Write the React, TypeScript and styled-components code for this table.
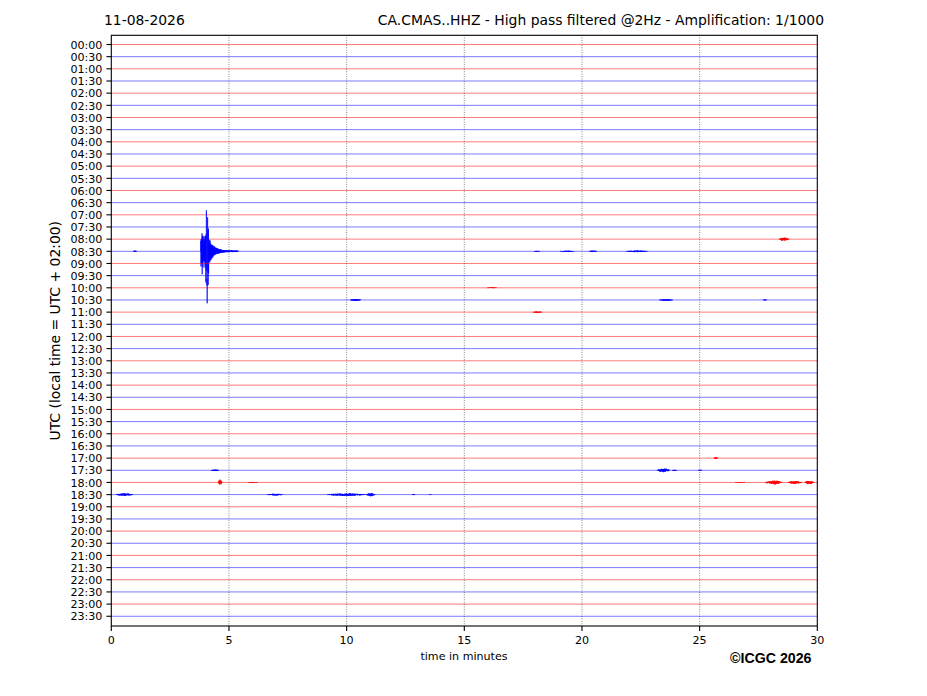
import React, { useMemo } from 'react';
import styled, { createGlobalStyle } from 'styled-components';

const GlobalStyle = createGlobalStyle`
  html, body { margin: 0; padding: 0; background: #ffffff; }
  body { font-family: "DejaVu Sans", "Noto Sans", sans-serif; color: #000; }
`;

const Figure = styled.div`
  width: 927px;
  height: 696px;
  display: flex;
  flex-direction: column;
  background: #ffffff;
  overflow: hidden;
`;

const Header = styled.header`
  height: 30px;
  box-sizing: border-box;
  padding: 12px 103px 0 104px;
  display: flex;
  justify-content: space-between;
  align-items: flex-start;
  font-family: "DejaVu Sans", sans-serif;
  font-size: 13.9px;
  line-height: normal;
  white-space: nowrap;
`;

const HeaderText = styled.span``;

const PlotRow = styled.div`
  display: flex;
  height: 620px;
  padding-left: 47px;
`;

const YLabelBox = styled.div`
  width: 16px;
  height: 591px;
  margin-top: 5.3px;
  display: flex;
  align-items: center;
  justify-content: center;
`;

const YLabel = styled.span`
  writing-mode: vertical-rl;
  transform: rotate(180deg);
  font-family: "DejaVu Sans", sans-serif;
  font-size: 13.9px;
  line-height: 16px;
  white-space: nowrap;
`;

const Chart = styled.svg`
  display: block;
  flex: none;
`;

const TickLabel = styled.text`
  font-family: "DejaVu Sans", sans-serif;
  font-size: 11.1px;
  fill: #000;
`;

const Baseline = styled.line<{ $color: string }>`
  stroke: ${(p) => p.$color};
  stroke-width: 0.85;
  stroke-opacity: 0.62;
`;

const Burst = styled.path<{ $color: string }>`
  fill: none;
  stroke: ${(p) => p.$color};
  stroke-width: 0.7;
  stroke-linejoin: round;
`;

const GridLine = styled.line`
  stroke: #222;
  stroke-width: 0.6;
  stroke-dasharray: 0.9 1.5;
`;

const Tick = styled.line`
  stroke: #000;
  stroke-width: 1.1;
`;

const Frame = styled.rect`
  fill: none;
  stroke: #000;
  stroke-width: 1.1;
`;

const Footer = styled.footer`
  display: grid;
  grid-template-columns: 111px 706px;
`;

const FooterAxis = styled.div`
  grid-column: 2;
  display: grid;
  grid-template-columns: 1fr auto 1fr;
  align-items: start;
`;

const XLabel = styled.span`
  grid-column: 2;
  font-family: "DejaVu Sans", sans-serif;
  font-size: 11.1px;
  line-height: normal;
  white-space: nowrap;
`;

const Copyright = styled.span`
  grid-column: 3;
  justify-self: end;
  margin-right: 5.5px;
  font-family: "Liberation Sans", Arial, sans-serif;
  font-weight: bold;
  font-size: 14.2px;
  line-height: normal;
  white-space: nowrap;
`;

// ---- geometry ----
const AX_L = 111.3;
const AX_R = 817.3;
const AX_T = 35.3;
const AX_B = 626;
const PX_PER_MIN = (AX_R - AX_L) / 30;
const LINE0 = 44.5;
const LINE_STEP = 12.165;

type BurstSpec = { x0: number; x1: number; amp: number };

const BURSTS: Record<number, BurstSpec[]> = {
  16: [{ x0: 779, x1: 789, amp: 2 }],
  17: [
    { x0: 133, x1: 137, amp: 0.7 },
    { x0: 534, x1: 540, amp: 0.6 },
    { x0: 560, x1: 574, amp: 0.7 },
    { x0: 589, x1: 597, amp: 0.9 },
    { x0: 626, x1: 648, amp: 0.9 },
  ],
  20: [{ x0: 487, x1: 497, amp: 0.5 }],
  21: [
    { x0: 350, x1: 361, amp: 1.1 },
    { x0: 659, x1: 673, amp: 0.9 },
    { x0: 763, x1: 767, amp: 0.5 },
  ],
  22: [{ x0: 533, x1: 542, amp: 0.9 }],
  34: [{ x0: 714, x1: 717.5, amp: 1.4 }],
  35: [
    { x0: 211, x1: 219, amp: 0.8 },
    { x0: 657, x1: 670, amp: 2 },
    { x0: 672, x1: 677, amp: 0.6 },
    { x0: 698, x1: 702, amp: 0.5 },
  ],
  36: [
    { x0: 218, x1: 222, amp: 3.2 },
    { x0: 248, x1: 258, amp: 0.5 },
    { x0: 735, x1: 745, amp: 0.5 },
    { x0: 765, x1: 782, amp: 2 },
    { x0: 788, x1: 802, amp: 1.5 },
    { x0: 805, x1: 814, amp: 2 },
  ],
  37: [
    { x0: 116, x1: 133, amp: 1.5 },
    { x0: 267, x1: 283, amp: 1 },
    { x0: 327, x1: 366, amp: 1.4 },
    { x0: 366, x1: 375, amp: 1.8 },
    { x0: 412, x1: 415, amp: 0.6 },
    { x0: 429, x1: 431.5, amp: 0.4 },
  ],
};

function mulberry32(seed: number) {
  let a = seed >>> 0;
  return () => {
    a = (a + 0x6d2b79f5) >>> 0;
    let t = a;
    t = Math.imul(t ^ (t >>> 15), t | 1);
    t ^= t + Math.imul(t ^ (t >>> 7), t | 61);
    return ((t ^ (t >>> 14)) >>> 0) / 4294967296;
  };
}

const f = (n: number) => n.toFixed(2);

function burstSegment(b: BurstSpec, y: number, rand: () => number): string {
  let d = `M${f(b.x0)} ${f(y)}`;
  let s = 1;
  for (let x = b.x0; x <= b.x1; x += 0.25) {
    const t = (x - b.x0) / (b.x1 - b.x0);
    const env = b.amp * Math.pow(Math.sin(Math.PI * t), 0.7);
    d += ` L${f(x)} ${f(y + env * (0.3 + 0.7 * rand()) * s)}`;
    s = -s;
  }
  d += ` L${f(b.x1)} ${f(y)}`;
  return d;
}

function quakeSegment(y: number, rand: () => number): string {
  let d = `M200.6 ${f(y)}`;
  let s = -1;
  for (let x = 200.8; x <= 238; x += 0.2) {
    let env: number;
    if (x < 205.6) env = 14 + 5 * rand();
    else if (x < 208.6) env = 26 + 12 * rand();
    else env = 0.7 + 13.5 * Math.exp(-(x - 208.6) / 5);
    let v = env * (0.55 + 0.45 * rand()) * s;
    if (Math.abs(x - 202.2) < 0.1) v = 23;
    if (Math.abs(x - 206.4) < 0.1) v = -41;
    if (Math.abs(x - 206.8) < 0.1) v = 34;
    if (Math.abs(x - 207.2) < 0.1) v = 52;
    if (Math.abs(x - 207.6) < 0.1) v = -34;
    d += ` L${f(x)} ${f(y + v)}`;
    s = -s;
  }
  d += ` L238.5 ${f(y)}`;
  return d;
}

function buildBursts(i: number): string {
  const y = LINE0 + i * LINE_STEP;
  const rand = mulberry32(1000 + i * 7919);
  const parts = (BURSTS[i] || []).map((b) => burstSegment(b, y, rand));
  if (i === 17) parts.push(quakeSegment(y, rand));
  return parts.join(' ');
}

const pad = (n: number) => String(n).padStart(2, '0');
const HOURS = Array.from({ length: 48 }, (_, i) => `${pad(Math.floor(i / 2))}:${i % 2 ? '30' : '00'}`);

export default function App() {
  const bursts = useMemo(() => HOURS.map((_, i) => buildBursts(i)), []);
  return (
    <>
      <GlobalStyle />
      <Figure>
        <Header>
          <HeaderText>11-08-2026</HeaderText>
          <HeaderText>CA.CMAS..HHZ - High pass filtered @2Hz - Amplification: 1/1000</HeaderText>
        </Header>
        <PlotRow>
          <YLabelBox>
            <YLabel>UTC (local time = UTC + 02:00)</YLabel>
          </YLabelBox>
          <Chart width={770} height={620} viewBox="63 30 770 620">
            {HOURS.map((h, i) => {
              const y = LINE0 + i * LINE_STEP;
              const color = i % 2 === 0 ? '#ff0000' : '#0000ff';
              return (
                <g key={h}>
                  <Baseline x1={AX_L} x2={AX_R} y1={y} y2={y} $color={color} />
                  {bursts[i] && <Burst d={bursts[i]} $color={color} />}
                </g>
              );
            })}
            {[1, 2, 3, 4, 5].map((k) => (
              <GridLine key={k} x1={AX_L + k * 5 * PX_PER_MIN} x2={AX_L + k * 5 * PX_PER_MIN} y1={AX_T} y2={AX_B} />
            ))}
            <Frame x={AX_L} y={AX_T} width={AX_R - AX_L} height={AX_B - AX_T} />
            {HOURS.map((h, i) => {
              const y = LINE0 + i * LINE_STEP;
              return (
                <g key={h}>
                  <Tick x1={AX_L - 4.9} x2={AX_L} y1={y} y2={y} />
                  <TickLabel x={102.4} y={y + 4.2} textAnchor="end">
                    {h}
                  </TickLabel>
                </g>
              );
            })}
            {[0, 1, 2, 3, 4, 5, 6].map((k) => {
              const x = AX_L + k * 5 * PX_PER_MIN;
              return (
                <g key={k}>
                  <Tick x1={x} x2={x} y1={AX_B} y2={AX_B + 4.9} />
                  <TickLabel x={x} y={644} textAnchor="middle">
                    {k * 5}
                  </TickLabel>
                </g>
              );
            })}
          </Chart>
        </PlotRow>
        <Footer>
          <FooterAxis>
            <XLabel>time in minutes</XLabel>
            <Copyright>©ICGC 2026</Copyright>
          </FooterAxis>
        </Footer>
      </Figure>
    </>
  );
}
